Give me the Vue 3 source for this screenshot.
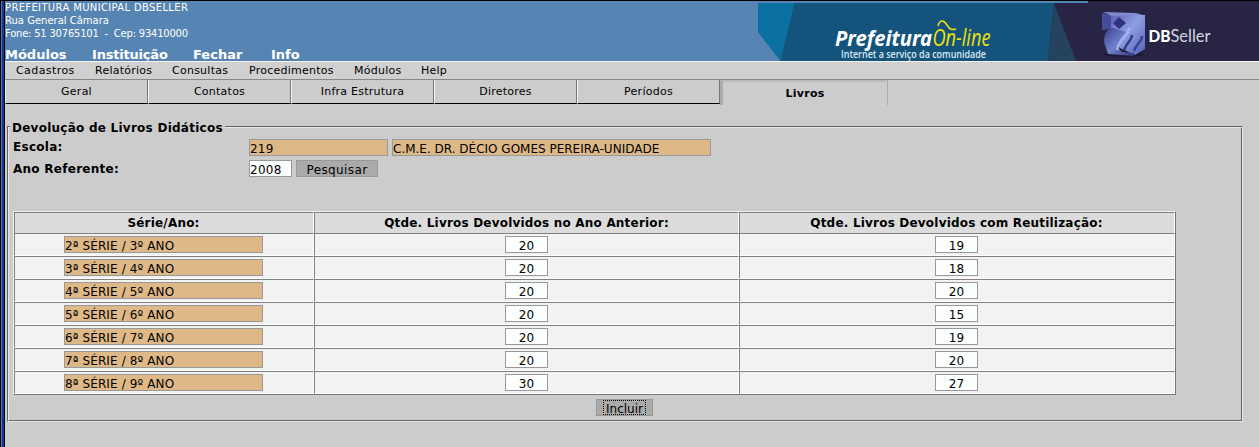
<script setup>
const menus = ['Módulos', 'Instituição', 'Fechar', 'Info']
const submenus = ['Cadastros', 'Relatórios', 'Consultas', 'Procedimentos', 'Módulos', 'Help']
const tabs = ['Geral', 'Contatos', 'Infra Estrutura', 'Diretores', 'Períodos']
const rows = [
  ['2ª SÉRIE / 3º ANO', 20, 19],
  ['3ª SÉRIE / 4º ANO', 20, 18],
  ['4ª SÉRIE / 5º ANO', 20, 20],
  ['5ª SÉRIE / 6º ANO', 20, 15],
  ['6ª SÉRIE / 7º ANO', 20, 19],
  ['7ª SÉRIE / 8º ANO', 20, 20],
  ['8ª SÉRIE / 9º ANO', 30, 27],
]
</script>

<template>
  <div class="window">
    <div class="edge"></div>
    <div class="page">
      <header class="header">
        <div class="info">
          <div class="l1">PREFEITURA MUNICIPAL DBSELLER</div>
          <div class="l2">Rua General Câmara</div>
          <div class="l3">Fone: 51 30765101 &nbsp;- &nbsp;Cep: 93410000</div>
          <nav class="menus"><span v-for="(m, i) in menus" :key="m" :class="'m' + i">{{ m }}</span></nav>
        </div>
        <svg class="banner" width="501" height="60" viewBox="758 1 501 60">
          <defs>
            <linearGradient id="face" x1="0" y1="0" x2="1" y2="1">
              <stop offset="0" stop-color="#5a62b8" /><stop offset=".45" stop-color="#8f9fe4" /><stop offset="1" stop-color="#5262b6" />
            </linearGradient>
            <linearGradient id="side" x1="0" y1="0" x2="1" y2="1">
              <stop offset="0" stop-color="#39408c" /><stop offset=".5" stop-color="#7181cc" /><stop offset="1" stop-color="#34377a" />
            </linearGradient>
            <filter id="soft"><feGaussianBlur stdDeviation=".6" /></filter>
          </defs>
          <rect x="758" y="3" width="330" height="58" fill="#14547c" />
          <path d="M758 3H794.500L780.500 61L758 32Z" fill="#0a70a0" />
          <path d="M758 32L780.500 61H758Z" fill="#5785b3" />
          <path d="M1054 3H1088V1H1259V61H1048Z" fill="#272543" />
          <path d="M1054 3L1076 61H1048Z" fill="#25425f" />
          <text class="brand" x="835" y="46" textLength="97" lengthAdjust="spacingAndGlyphs">Prefeitura</text>
          <text class="online" x="932.500" y="46" textLength="58" lengthAdjust="spacingAndGlyphs">On-line</text>
          <path d="M938 26C940 19 944 20 947 25S952 30 956 29" fill="none" stroke="#f0e10c" stroke-width="1.500" />
          <text class="slogan" x="841" y="57.500" textLength="145" lengthAdjust="spacingAndGlyphs">Internet a serviço da comunidade</text>
          <g filter="url(#soft)">
            <ellipse cx="1124" cy="54" rx="20" ry="3" fill="#1d1a35" />
            <path d="M1102 13L1112 15V29L1102 30Z" fill="#454c98" />
            <path d="M1103 12L1136 13L1146 16L1112 16Z" fill="#8088cf" />
            <path d="M1111 16L1145 15V49L1135 55L1120 48L1111 32Z" fill="url(#face)" />
            <path d="M1113 28C1107 29 1104 34 1104 42L1108 54L1133 56L1134 53L1122 52C1117 49 1118 40 1126 32Z" fill="url(#side)" />
            <path d="M1119 17L1126 23L1119 29L1113 23Z" fill="#30337f" />
            <path d="M1129 28C1129 36 1119 38 1117 50" fill="none" stroke="#a3b1ef" stroke-width="2.500" />
            <path d="M1132 35C1132 40 1127 42 1124 50" fill="none" stroke="#343a83" stroke-width="2.500" />
            <path d="M1142 36C1142 42 1136 44 1134 51" fill="none" stroke="#3c4390" stroke-width="2.500" />
          </g>
          <text class="db" x="1148.500" y="42" textLength="22" lengthAdjust="spacingAndGlyphs">DB</text>
          <text class="seller" x="1170.500" y="42" textLength="40" lengthAdjust="spacingAndGlyphs">Seller</text>
        </svg>
      </header>
      <nav class="submenu"><span v-for="(m, i) in submenus" :key="m" :class="'s' + i">{{ m }}</span></nav>
      <div class="tabs">
        <div v-for="t in tabs" :key="t" class="tab">{{ t }}</div>
        <div class="active">Livros</div>
      </div>
      <section class="group">
        <div class="inner">
          <div class="legend"><span>Devolução de Livros Didáticos</span></div>
          <div class="field escola">
            <label>Escola:</label>
            <div class="box tan code">219</div>
            <div class="box tan name">C.M.E. DR. DÉCIO GOMES PEREIRA-UNIDADE</div>
          </div>
          <div class="field ano">
            <label>Ano Referente:</label>
            <div class="box small year">2008</div>
            <div class="btn search">Pesquisar</div>
          </div>
          <div class="table">
            <div class="row head">
              <div class="cell">Série/Ano:</div>
              <div class="cell">Qtde. Livros Devolvidos no Ano Anterior:</div>
              <div class="cell">Qtde. Livros Devolvidos com Reutilização:</div>
            </div>
            <div v-for="r in rows" :key="r[0]" class="row">
              <div class="cell"><div class="box tan serie">{{ r[0] }}</div></div>
              <div class="cell"><div class="box small num">{{ r[1] }}</div></div>
              <div class="cell"><div class="box small num">{{ r[2] }}</div></div>
            </div>
          </div>
          <div class="btn submit"><span>Incluir</span></div>
        </div>
      </section>
    </div>
  </div>
</template>

<style>
body { background: #ccc; overflow: hidden; }
</style>

<style scoped>
* { box-sizing: border-box; }
.window { display: flex; width: 1259px; height: 447px; border-top: 1px solid #000; background: #ccc; font: 12px "DejaVu Sans", sans-serif; color: #000; white-space: nowrap; overflow: hidden; }
.edge { width: 5px; flex: none; background: linear-gradient(90deg, #000 1px, #4a78b4 1px 2px, #083c96 2px 4px, #000 4px); }
.page { flex: 1; min-width: 0; }
.header { height: 60px; background: #5785b3; display: flex; justify-content: space-between; color: #fff; }
.banner { display: block; flex: none; }
.info { font-size: 10px; line-height: 13px; }
.l1 { letter-spacing: .35px; }
.l3 { letter-spacing: -.22px; }
.menus { display: flex; font-weight: bold; font-size: 13px; line-height: 16px; padding-top: 7px; }
.m0 { width: 87px; } .m1 { width: 101px; letter-spacing: -.2px; } .m2 { width: 78px; }
.brand { font: italic bold 21px "Noto Sans", "Open Sans", sans-serif; fill: #fff; }
.online { font: italic 23px "Open Sans", sans-serif; fill: #f0e10c; }
.slogan { font: 600 10px "Open Sans", sans-serif; fill: #dde8f0; }
.db { font: 900 17px Lato, sans-serif; fill: #fff; }
.seller { font: 400 18px Lato, sans-serif; fill: #d4d4e0; }
.submenu { display: flex; height: 19px; border-top: 1px solid #f4f4f4; border-bottom: 1px solid #888; background: #d0d0d0; padding-left: 11px; font-size: 11px; line-height: 18px; letter-spacing: .25px; }
.s0 { width: 79px; letter-spacing: .42px; } .s1 { width: 77px; } .s2 { width: 77px; } .s3 { width: 105px; } .s4 { width: 67px; }
.tabs { display: flex; height: 25px; font-size: 11px; letter-spacing: .25px; text-align: center; }
.tab { width: 143px; height: 24px; line-height: 23px; border-left: 1px solid #f4f4f4; border-right: 1px solid #777; border-bottom: 1px solid #000; }
.active { width: 168px; height: 25px; line-height: 24px; border-left: 3px solid #aaa; border-top: 2px solid #bbb; border-right: 1px solid #aaa; font-weight: bold; }
.group { width: 1236px; height: 296px; margin: 21px 0 0 2px; border: 1px solid; border-color: #666 #e8e8e8 #e8e8e8 #666; }
.inner { height: 294px; border: 1px solid; border-color: #e8e8e8 #666 #666 #e8e8e8; }
.legend { height: 13px; margin-top: -2px; padding-left: 1px; font-weight: bold; line-height: 5px; }
.legend span { display: inline-block; height: 3px; width: 215px; padding-left: 2px; background: #ccc; letter-spacing: .25px; }
.field { display: flex; height: 17px; padding-left: 4px; }
.field label { width: 236px; font-weight: bold; line-height: 16px; letter-spacing: .27px; }
.field.ano { margin-top: 4px; }
.field.ano label { line-height: 18px; }
.box { height: 17px; border: 1px solid #999; line-height: 18px; background: #fbfffd; text-align: left; }
.tan { background: #deb887; }
.code { width: 139px; margin-right: 4px; letter-spacing: .2px; }
.name { width: 319px; }
.small { width: 43px; }
.year { margin-right: 4px; letter-spacing: .3px; }
.btn { height: 17px; border: 1px solid #999; background: #aaa; line-height: 18px; text-align: center; }
.search { width: 82px; letter-spacing: .4px; }
.table { width: 1163px; margin: 34px 0 0 4px; border: 1px solid; border-color: #f2f2f2 #777 #777 #f2f2f2; }
.row { display: grid; grid-template-columns: 300px 425px 436px; height: 23px; }
.cell { border: 1px solid; border-color: #808080 #fff #fff #808080; background: #f2f2f2; display: flex; justify-content: center; padding-top: 2px; }
.cell:nth-child(odd) { padding-right: 1px; }
.head { height: 21px; }
.head .cell { background: #dcdcdc; padding-top: 0; font-weight: bold; line-height: 20px; letter-spacing: .2px; }
.serie { width: 199px; letter-spacing: .12px; }
.num { text-align: center; }
.submit { width: 57px; margin: 4px 0 0 587px; padding: 0 6px; }
.submit span { display: block; height: 15px; line-height: 18px; outline: 1px dotted #000; outline-offset: -1px; }
</style>
